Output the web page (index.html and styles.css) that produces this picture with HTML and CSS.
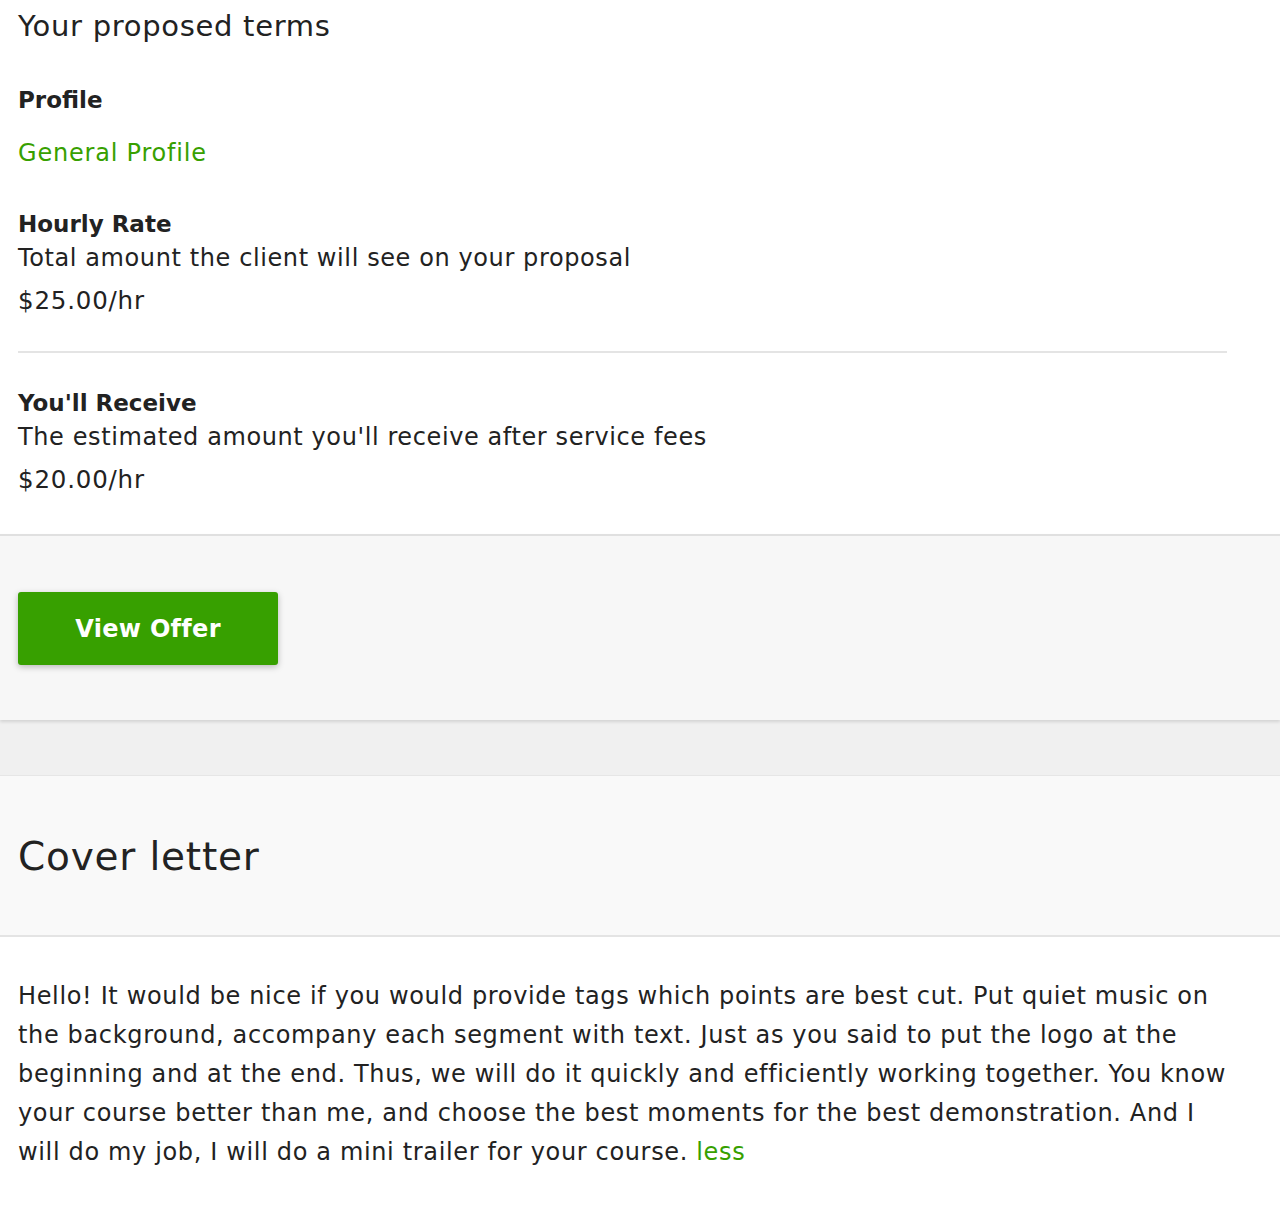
FILE: index.html
```html
<!DOCTYPE html>
<html lang="en">
<head>
<meta charset="utf-8">
<title>Proposal</title>
<link rel="stylesheet" href="styles.css">
</head>
<body>
<div class="page">
  <section class="card">
    <div class="card-body terms">
      <h2 class="title">Your proposed terms</h2>
      <div class="group profile">
        <h3 class="label">Profile</h3>
        <a class="link profile-link" href="#">General Profile</a>
      </div>
      <div class="group rate">
        <h3 class="label">Hourly Rate</h3>
        <p class="desc">Total amount the client will see on your proposal</p>
        <p class="amount">$25.00/hr</p>
      </div>
      <hr class="divider">
      <div class="group receive">
        <h3 class="label">You'll Receive</h3>
        <p class="desc">The estimated amount you'll receive after service fees</p>
        <p class="amount">$20.00/hr</p>
      </div>
    </div>
    <div class="card-footer">
      <button class="btn-primary" type="button">View Offer</button>
    </div>
  </section>
  <div class="spacer"></div>
  <section class="card card-last">
    <div class="card-header">
      <h2 class="header-title">Cover letter</h2>
    </div>
    <div class="card-body letter">
      <p class="letter-text">Hello! It would be nice if you would provide tags which points are best cut. Put quiet music on the background, accompany each segment with text. Just as you said to put the logo at the beginning and at the end. Thus, we will do it quickly and efficiently working together. You know your course better than me, and choose the best moments for the best demonstration. And I will do my job, I will do a mini trailer for your course. <a class="link" href="#">less</a></p>
    </div>
  </section>
</div>
</body>
</html>
```
FILE: styles.css
```css
* { box-sizing: border-box; }
html, body { margin: 0; padding: 0; }
body {
  background: #f0f0f0;
  font-family: "DejaVu Sans", "Noto Sans", sans-serif;
  color: #222;
  width: 1280px;
  min-height: 1218px;
}
.page { display: flex; flex-direction: column; min-height: 1218px; }
.card { background: #fff; }
.card-last { flex: 1; }
.card-body { padding: 0 53px 0 18px; }
.terms { padding-top: 7px; padding-bottom: 37px; }
.title {
  margin: 0;
  font-size: 29px;
  font-weight: 400;
  letter-spacing: 0.7px;
  line-height: 38px;
}
.group { display: flex; flex-direction: column; }
.label {
  margin: 0;
  font-size: 23px;
  font-weight: 700;
  line-height: 34px;
}
.profile { margin-top: 38px; }
.link { color: #37a000; text-decoration: none; }
.profile-link { font-size: 24px; letter-spacing: 0.8px; line-height: 34px; margin-top: 19px; }
.rate { margin-top: 37px; }
.desc { margin: 0; font-size: 24px; letter-spacing: 0.6px; line-height: 34px; }
.amount { margin: 9px 0 0; font-size: 24.5px; letter-spacing: 0.8px; line-height: 34px; }
.divider {
  margin: 33px 0 0;
  border: 0;
  height: 2px;
  background: #e4e4e4;
}
.receive { margin-top: 33px; }
.card-footer {
  background: #f7f7f7;
  border-top: 2px solid #e0e0e0;
  padding: 56px 18px 55px;
  box-shadow: 0 2px 3px rgba(0,0,0,0.12);
  position: relative;
}
.btn-primary {
  display: block;
  width: 260px;
  height: 73px;
  border: 0;
  border-radius: 3px;
  background: #37a000;
  color: #fff;
  font-family: inherit;
  font-size: 24px;
  font-weight: 700;
  letter-spacing: 0.3px;
  box-shadow: 0 2px 6px rgba(0,0,0,0.25);
}
.spacer { height: 56px; border-bottom: 1px solid #e6e6e6; }
.card-header {
  background: #f9f9f9;
  border-bottom: 2px solid #e4e4e4;
  height: 161px;
  display: flex;
  align-items: center;
  padding: 3px 18px 0;
}
.header-title {
  margin: 0;
  font-size: 39px;
  font-weight: 400;
  letter-spacing: 0.8px;
  line-height: 48px;
}
.letter { padding-top: 40px; padding-bottom: 40px; padding-right: 50px; }
.letter-text {
  margin: 0;
  font-size: 24px;
  letter-spacing: 0.65px;
  line-height: 39px;
}
```
